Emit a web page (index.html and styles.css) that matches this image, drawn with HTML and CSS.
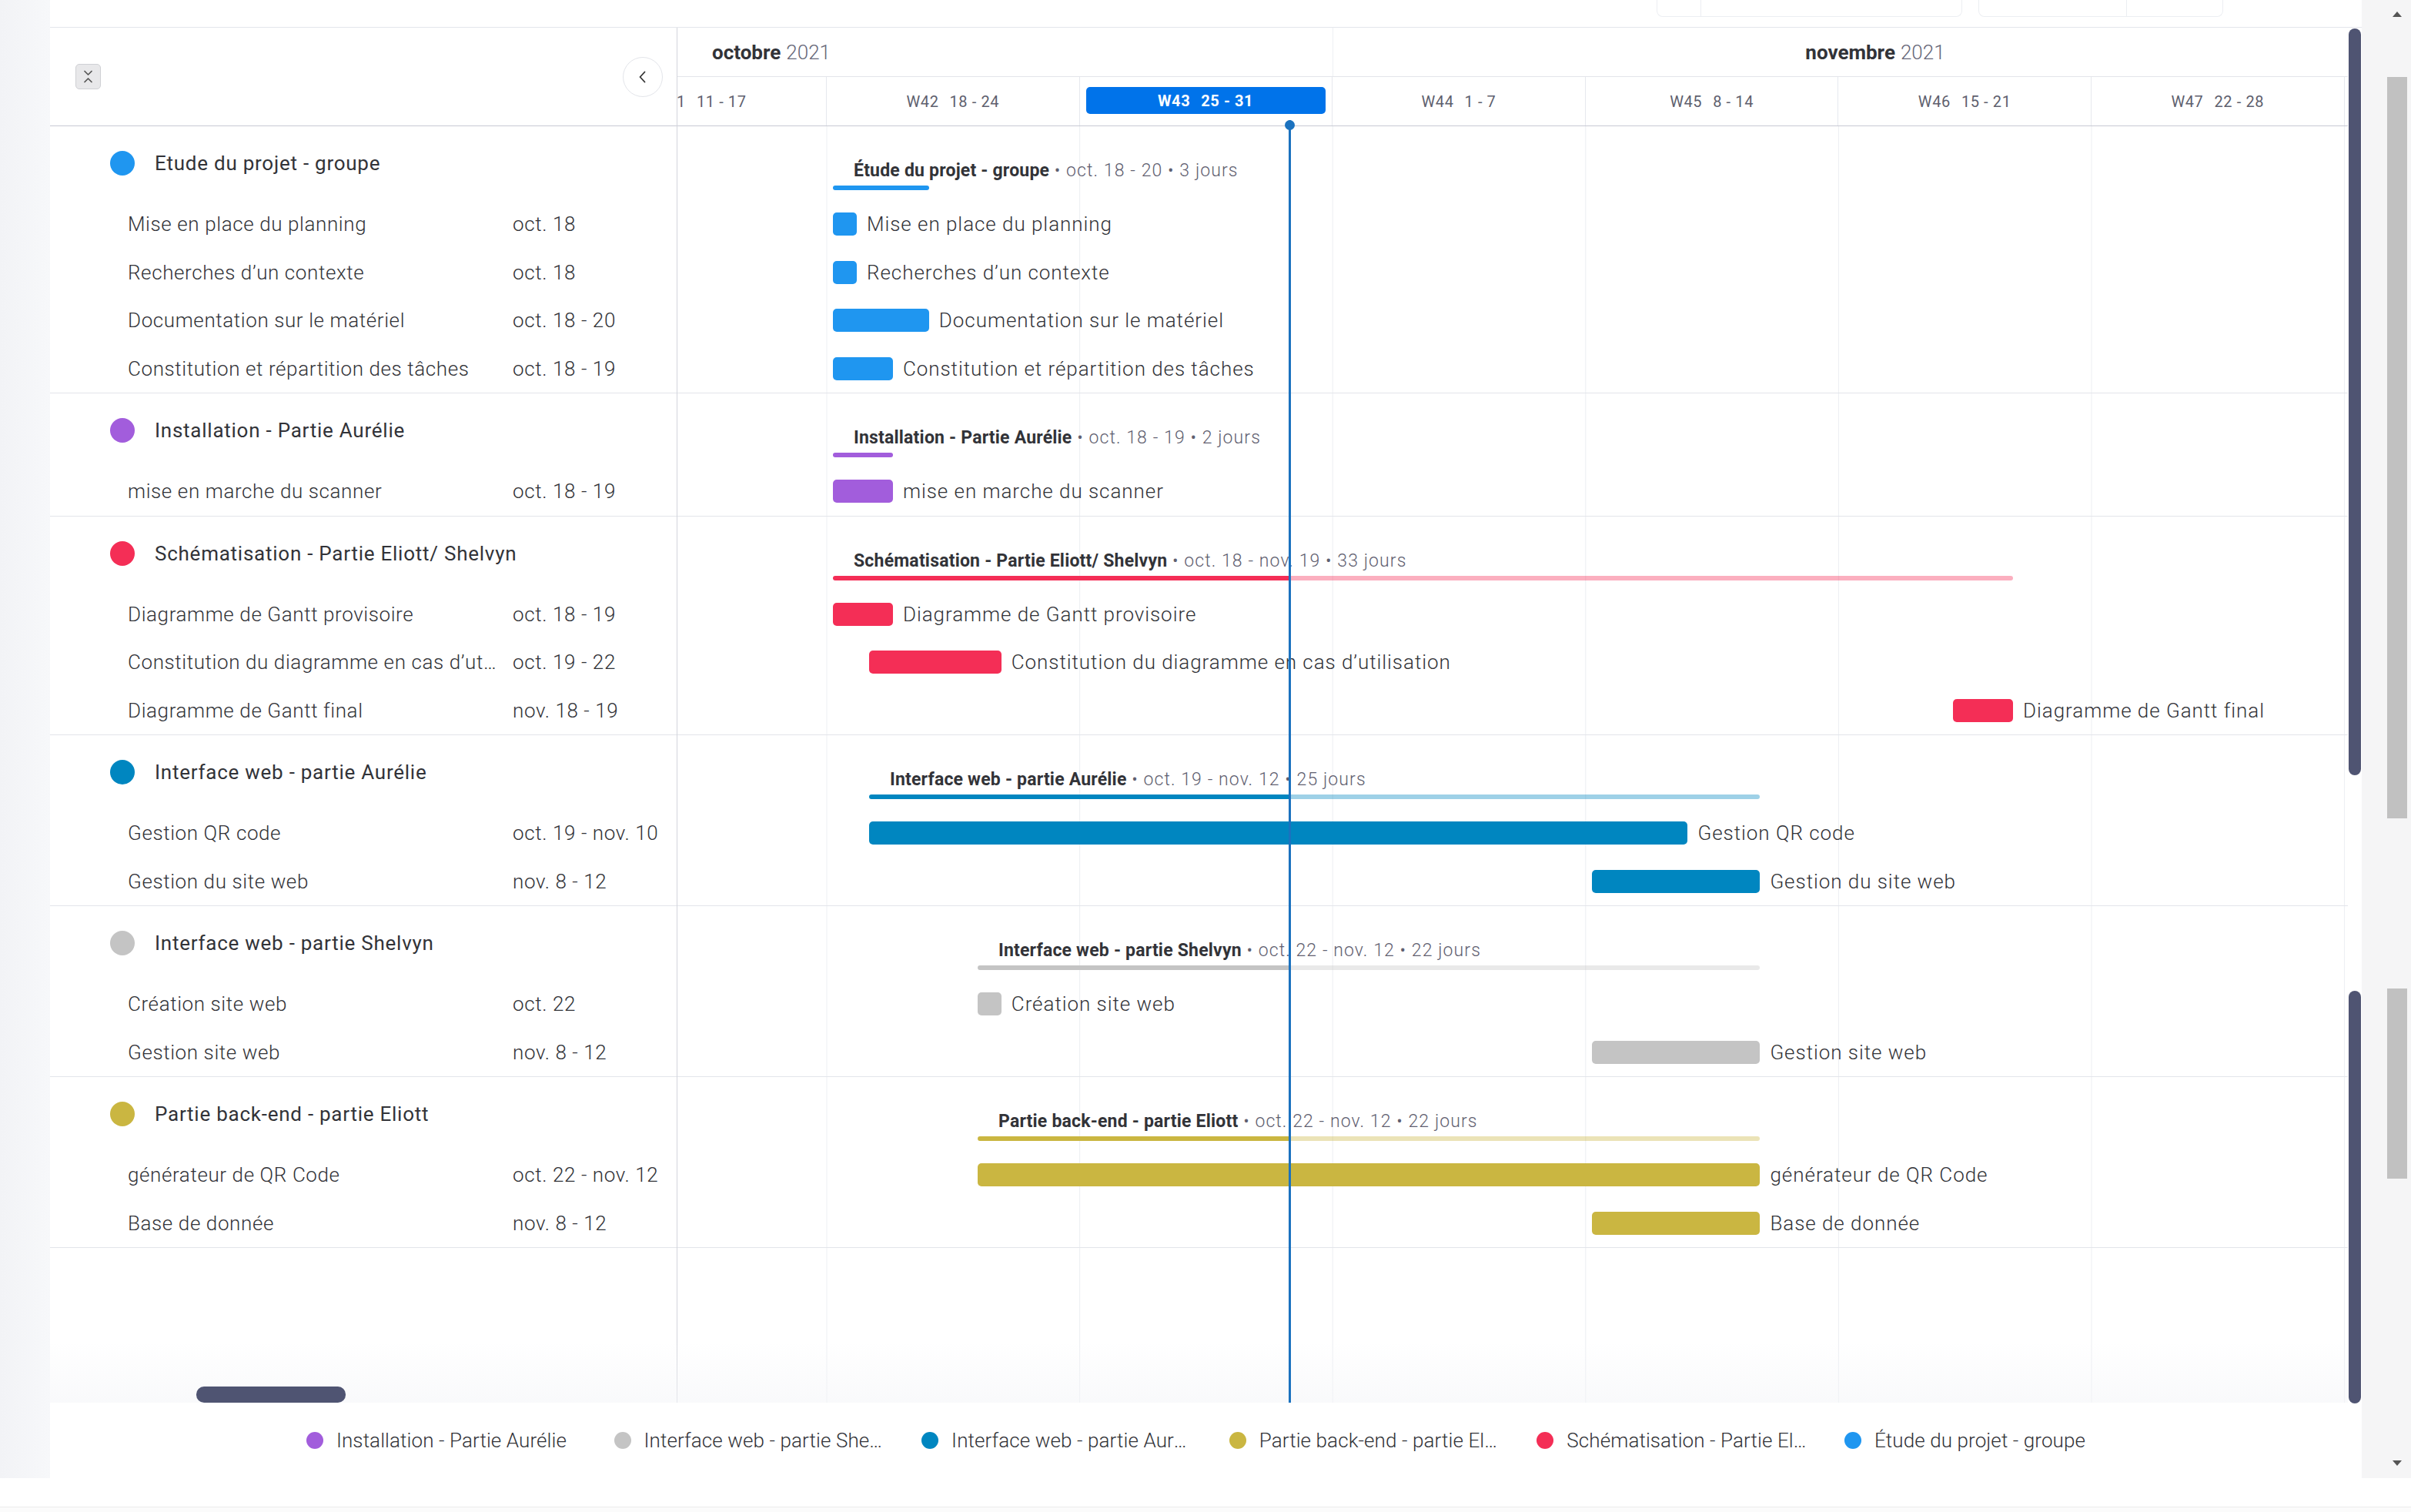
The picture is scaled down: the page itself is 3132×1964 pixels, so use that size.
FILE: index.html
```html
<!DOCTYPE html>
<html lang="fr">
<head>
<meta charset="utf-8">
<title>Gantt</title>
<link rel="stylesheet" href="styles.css">
</head>
<body>
<div class="app">
  <div class="main-row">
    <div class="gutter"></div>
    <div class="board">
      <div class="topbar">
        <div class="ghost ghost-a"><span class="ghost-seg"></span></div>
        <div class="ghost ghost-b"><span class="ghost-seg"></span></div>
      </div>
      <div class="gantt">
        <div class="left">
          <div class="left-head">
            <span class="collapse-ic">
              <svg width="31" height="31" viewBox="0 0 31 31"><path d="M11 8.5l4.5 4.5 4.5-4.5M11 22.5l4.5-4.5 4.5 4.5" fill="none" stroke="#555" stroke-width="1.7" stroke-linecap="round" stroke-linejoin="round"/></svg>
            </span>
            <span class="back-btn">
              <svg width="20" height="20" viewBox="0 0 20 20"><path d="M12.5 3.5L6.5 10l6 6.5" fill="none" stroke="#333" stroke-width="1.8" stroke-linecap="round" stroke-linejoin="round"/></svg>
            </span>
          </div>
          <div class="left-body">
            <div class="grp">
              <div class="grp-title"><span class="dot blue"></span>Etude du projet - groupe</div>
              <div class="task"><span class="tname">Mise en place du planning</span><span class="tdate">oct. 18</span></div>
              <div class="task"><span class="tname">Recherches d’un contexte</span><span class="tdate">oct. 18</span></div>
              <div class="task"><span class="tname">Documentation sur le matériel</span><span class="tdate">oct. 18 - 20</span></div>
              <div class="task"><span class="tname">Constitution et répartition des tâches</span><span class="tdate">oct. 18 - 19</span></div>
            </div>
            <div class="grp">
              <div class="grp-title"><span class="dot purple"></span>Installation - Partie Aurélie</div>
              <div class="task"><span class="tname">mise en marche du scanner</span><span class="tdate">oct. 18 - 19</span></div>
            </div>
            <div class="grp">
              <div class="grp-title"><span class="dot red"></span>Schématisation - Partie Eliott/ Shelvyn</div>
              <div class="task"><span class="tname">Diagramme de Gantt provisoire</span><span class="tdate">oct. 18 - 19</span></div>
              <div class="task"><span class="tname">Constitution du diagramme en cas d’utilisation</span><span class="tdate">oct. 19 - 22</span></div>
              <div class="task"><span class="tname">Diagramme de Gantt final</span><span class="tdate">nov. 18 - 19</span></div>
            </div>
            <div class="grp">
              <div class="grp-title"><span class="dot dblue"></span>Interface web - partie Aurélie</div>
              <div class="task"><span class="tname">Gestion QR code</span><span class="tdate">oct. 19 - nov. 10</span></div>
              <div class="task"><span class="tname">Gestion du site web</span><span class="tdate">nov. 8 - 12</span></div>
            </div>
            <div class="grp">
              <div class="grp-title"><span class="dot grey"></span>Interface web - partie Shelvyn</div>
              <div class="task"><span class="tname">Création site web</span><span class="tdate">oct. 22</span></div>
              <div class="task"><span class="tname">Gestion site web</span><span class="tdate">nov. 8 - 12</span></div>
            </div>
            <div class="grp">
              <div class="grp-title"><span class="dot mustard"></span>Partie back-end - partie Eliott</div>
              <div class="task"><span class="tname">générateur de QR Code</span><span class="tdate">oct. 22 - nov. 12</span></div>
              <div class="task"><span class="tname">Base de donnée</span><span class="tdate">nov. 8 - 12</span></div>
            </div>
          </div>
          <div class="hthumb"></div>
        </div>

        <div class="timeline">
          <div class="tl-head">
            <div class="months">
              <div class="month month-oct"><b>octobre</b><span>2021</span></div>
              <div class="month month-nov"><b>novembre</b><span>2021</span></div>
            </div>
            <div class="weeks">
              <div class="week">W41<span class="rng">11 - 17</span></div>
              <div class="week">W42<span class="rng">18 - 24</span></div>
              <div class="week week-cur"><div class="chip">W43<span class="rng">25 - 31</span></div></div>
              <div class="week">W44<span class="rng">1 - 7</span></div>
              <div class="week">W45<span class="rng">8 - 14</span></div>
              <div class="week">W46<span class="rng">15 - 21</span></div>
              <div class="week">W47<span class="rng">22 - 28</span></div>
            </div>
          </div>
          <div class="tl-body">
            <div class="cgrp">
              <div class="cgrp-title">
                <div class="clabel" style="margin-left:229px"><b>Étude du projet - groupe</b><span> • oct. 18 - 20 • 3 jours</span></div>
                <div class="cline" style="margin-left:202px;width:124.8px"><i class="blue" style="flex:1"></i></div>
              </div>
              <div class="ctask"><span class="bar blue" style="margin-left:202px;width:31px"></span>Mise en place du planning</div>
              <div class="ctask"><span class="bar blue" style="margin-left:202px;width:31px"></span>Recherches d’un contexte</div>
              <div class="ctask"><span class="bar blue" style="margin-left:202px;width:124.8px"></span>Documentation sur le matériel</div>
              <div class="ctask"><span class="bar blue" style="margin-left:202px;width:77.9px"></span>Constitution et répartition des tâches</div>
            </div>
            <div class="cgrp">
              <div class="cgrp-title">
                <div class="clabel" style="margin-left:229px"><b>Installation - Partie Aurélie</b><span> • oct. 18 - 19 • 2 jours</span></div>
                <div class="cline" style="margin-left:202px;width:77.9px"><i class="purple" style="flex:1"></i></div>
              </div>
              <div class="ctask"><span class="bar purple" style="margin-left:202px;width:77.9px"></span>mise en marche du scanner</div>
            </div>
            <div class="cgrp">
              <div class="cgrp-title">
                <div class="clabel" style="margin-left:229px"><b>Schématisation - Partie Eliott/ Shelvyn</b><span> • oct. 18 - nov. 19 • 33 jours</span></div>
                <div class="cline" style="margin-left:202px;width:1533px"><i class="red" style="width:593px"></i><i class="red faded"></i></div>
              </div>
              <div class="ctask"><span class="bar red" style="margin-left:202px;width:77.9px"></span>Diagramme de Gantt provisoire</div>
              <div class="ctask"><span class="bar red" style="margin-left:248.9px;width:171.8px"></span>Constitution du diagramme en cas d’utilisation</div>
              <div class="ctask"><span class="bar red" style="margin-left:1657.1px;width:77.9px"></span>Diagramme de Gantt final</div>
            </div>
            <div class="cgrp">
              <div class="cgrp-title">
                <div class="clabel" style="margin-left:276px"><b>Interface web - partie Aurélie</b><span> • oct. 19 - nov. 12 • 25 jours</span></div>
                <div class="cline" style="margin-left:248.9px;width:1157.5px"><i class="dblue" style="width:546px"></i><i class="dblue faded"></i></div>
              </div>
              <div class="ctask"><span class="bar dblue" style="margin-left:248.9px;width:1063.6px"></span>Gestion QR code</div>
              <div class="ctask"><span class="bar dblue" style="margin-left:1187.7px;width:218.7px"></span>Gestion du site web</div>
            </div>
            <div class="cgrp">
              <div class="cgrp-title">
                <div class="clabel" style="margin-left:417px"><b>Interface web - partie Shelvyn</b><span> • oct. 22 - nov. 12 • 22 jours</span></div>
                <div class="cline" style="margin-left:389.8px;width:1016.7px"><i class="grey" style="width:405px"></i><i class="grey faded"></i></div>
              </div>
              <div class="ctask"><span class="bar grey" style="margin-left:389.8px;width:31px"></span>Création site web</div>
              <div class="ctask"><span class="bar grey" style="margin-left:1187.7px;width:218.7px"></span>Gestion site web</div>
            </div>
            <div class="cgrp">
              <div class="cgrp-title">
                <div class="clabel" style="margin-left:417px"><b>Partie back-end - partie Eliott</b><span> • oct. 22 - nov. 12 • 22 jours</span></div>
                <div class="cline" style="margin-left:389.8px;width:1016.7px"><i class="mustard" style="width:405px"></i><i class="mustard faded"></i></div>
              </div>
              <div class="ctask"><span class="bar mustard" style="margin-left:389.8px;width:1016.7px"></span>générateur de QR Code</div>
              <div class="ctask"><span class="bar mustard" style="margin-left:1187.7px;width:218.7px"></span>Base de donnée</div>
            </div>
          </div>
          <div class="today"></div>
        </div>

        <div class="vscroll">
          <div class="vthumb vthumb-1"></div>
          <div class="vthumb vthumb-2"></div>
        </div>
        <div class="bottom-fade"></div>
      </div>

      <div class="legend">
        <div class="lg-item"><span class="lg-dot purple"></span><span class="lg-text">Installation - Partie Aurélie</span></div>
        <div class="lg-item"><span class="lg-dot grey"></span><span class="lg-text">Interface web - partie Shelvyn</span></div>
        <div class="lg-item"><span class="lg-dot dblue"></span><span class="lg-text">Interface web - partie Aurélie</span></div>
        <div class="lg-item"><span class="lg-dot mustard"></span><span class="lg-text">Partie back-end - partie Eliott</span></div>
        <div class="lg-item"><span class="lg-dot red"></span><span class="lg-text">Schématisation - Partie Eliott/ Shelvyn</span></div>
        <div class="lg-item lg-last"><span class="lg-dot blue"></span><span class="lg-text">Étude du projet - groupe</span></div>
      </div>
    </div>
    <div class="pscroll">
      <span class="arrow-up"></span>
      <span class="pthumb pthumb-1"></span>
      <span class="pthumb pthumb-2"></span>
      <span class="arrow-down"></span>
    </div>
  </div>
  <div class="bottom-strip"></div>
</div>
</body>
</html>
```

FILE: styles.css
```css
* { box-sizing: border-box; }
html, body { margin: 0; padding: 0; }
body {
  width: 3132px;
  height: 1964px;
  overflow: hidden;
  background: #fff;
  color: #323338;
  font-family: Roboto, "Liberation Sans", Arial, sans-serif;
}

.app { display: flex; flex-direction: column; width: 3132px; height: 1964px; }
.main-row { display: flex; height: 1920px; flex: none; }
.gutter { flex: none; width: 65px; background: linear-gradient(to right, #f2f3f6, #f7f8fa); }
.board { flex: none; width: 3003px; display: flex; flex-direction: column; background: #fff; }

/* top bar with the bottoms of two buttons */
.topbar {
  flex: none;
  height: 36px;
  border-bottom: 1px solid #e4e6eb;
  display: flex;
  justify-content: flex-end;
  gap: 21px;
  padding-right: 180px;
}
.ghost { height: 22px; border: 1px solid #eceef2; border-top: none; border-radius: 0 0 8px 8px; display: flex; }
.ghost-a { width: 397px; }
.ghost-b { width: 318px; }
.ghost-seg { border-right: 1px solid #eceef2; height: 100%; }
.ghost-a .ghost-seg { width: 57px; }
.ghost-b .ghost-seg { width: 192px; }

/* gantt */
.gantt { flex: none; height: 1786px; display: flex; position: relative; }
.bottom-fade {
  position: absolute;
  left: 0;
  right: 18px;
  bottom: 0;
  height: 80px;
  background: linear-gradient(to bottom, rgba(244, 245, 248, 0), rgba(244, 245, 248, 0.55));
  pointer-events: none;
}

.left {
  flex: none;
  width: 815px;
  border-right: 1px solid #d3d5dc;
  position: relative;
  display: flex;
  flex-direction: column;
}
.left-head {
  flex: none;
  height: 128px;
  border-bottom: 1px solid #c8cad3;
  display: flex;
  align-items: center;
  justify-content: space-between;
  padding: 0 18px 0 33px;
}
.collapse-ic {
  width: 33px; height: 33px;
  border: 1px solid #cfd0d4;
  border-radius: 5px;
  background: #e8e8ea;
  display: flex; align-items: center; justify-content: center;
}
.back-btn {
  width: 52px; height: 52px;
  border-radius: 50%;
  border: 1px solid #e3e5ea;
  background: #fff;
  display: flex; align-items: center; justify-content: center;
}

.grp { border-bottom: 1px solid #e3e5ea; }
.grp-title {
  height: 96px;
  display: flex;
  align-items: center;
  padding-left: 78px;
  font-size: 26px;
  letter-spacing: 0.75px;
  font-weight: 400;
  color: #323338;
}
.dot { width: 32px; height: 32px; border-radius: 50%; margin-right: 26px; flex: none; }
.task {
  height: 62.5px;
  display: flex;
  align-items: center;
  padding-left: 101px;
  font-size: 26px;
  font-weight: 300;
  letter-spacing: 0.6px;
  color: #323338;
}
.tname { width: 480px; white-space: nowrap; overflow: hidden; text-overflow: ellipsis; }
.tdate { margin-left: 20px; white-space: nowrap; }

.hthumb {
  position: absolute;
  left: 190px;
  bottom: 0;
  width: 194px;
  height: 21px;
  border-radius: 10px;
  background: #4f5472;
  z-index: 2;
}

/* timeline */
.timeline {
  flex: none;
  width: 2170px;
  position: relative;
  overflow: hidden;
  display: flex;
  flex-direction: column;
}
.tl-head { flex: none; height: 128px; border-bottom: 1px solid #c8cad3; }
.months { height: 64px; border-bottom: 1px solid #e3e5ea; display: flex; }
.month { flex: none; height: 100%; display: flex; align-items: center; font-size: 26px; white-space: nowrap; }
.month-oct { width: 852px; padding-left: 45px; border-right: 1px solid #eef0f3; }
.month-nov { width: 1408px; justify-content: center; }
.month b { font-weight: 700; color: #323338; }
.month span { font-weight: 300; color: #676879; margin-left: 7px; }

.weeks { height: 63px; display: flex; }
.week {
  flex: none;
  width: 328.6px;
  height: 100%;
  border-right: 1px solid #e6e8ee;
  display: flex;
  align-items: center;
  justify-content: center;
  font-size: 20px;
  font-weight: 400;
  letter-spacing: 0.6px;
  color: #5e5f6e;
  white-space: nowrap;
}
.week:first-child { margin-left: -134.6px; }
.rng { margin-left: 14px; }
.week-cur { justify-content: flex-start; }
.chip {
  margin-left: 8px;
  width: 311px;
  height: 35px;
  margin-top: -2px;
  border-radius: 5px;
  background: #0073ea;
  color: #fff;
  font-weight: 700;
  display: flex;
  align-items: center;
  justify-content: center;
}

.tl-body {
  flex: 1;
  position: relative;
  background-image: linear-gradient(to right, #eceef2 1px, transparent 1px);
  background-size: 328.6px 100%;
  background-position: 193.5px 0;
}
.cgrp { border-bottom: 1px solid #e3e5ea; }
.cgrp-title {
  height: 96px;
  display: flex;
  flex-direction: column;
  justify-content: flex-end;
  align-items: flex-start;
  padding-bottom: 13px;
}
.clabel { font-size: 23px; line-height: 30px; white-space: nowrap; margin-bottom: 4px; letter-spacing: 0.2px; }
.clabel b { font-weight: 700; color: #323338; }
.clabel span { font-weight: 300; color: #5f6070; letter-spacing: 1.1px; }
.cline { height: 6px; display: flex; border-radius: 3px; overflow: hidden; }
.cline i { display: block; height: 100%; flex: none; }
.cline i.faded { flex: 1; opacity: 0.38; }

.ctask {
  height: 62.5px;
  display: flex;
  align-items: center;
  font-size: 26px;
  font-weight: 300;
  letter-spacing: 0.95px;
  white-space: nowrap;
  color: #323338;
}
.bar { flex: none; height: 30px; border-radius: 5px; margin-right: 13px; }

.today {
  position: absolute;
  left: 794px;
  top: 120px;
  bottom: 0;
  width: 3px;
  background: #1b72bf;
  z-index: 1;
}
.today::before {
  content: "";
  position: absolute;
  top: 0;
  left: -5px;
  width: 13px;
  height: 13px;
  border-radius: 50%;
  background: #1b72bf;
}

/* colours */
.blue { background: #1f96f0; }
.purple { background: #a25ddc; }
.red { background: #f42e56; }
.dblue { background: #0086c0; }
.grey { background: #c4c4c4; }
.mustard { background: #cab641; }

/* inner vertical scrollbar */
.vscroll { flex: none; width: 18px; display: flex; flex-direction: column; align-items: center; padding-top: 1px; }
.vthumb { width: 16px; border-radius: 8px; background: #4f5472; flex: none; }
.vthumb-1 { height: 970px; }
.vthumb-2 { height: 536px; margin-top: 280px; }

/* legend */
.legend {
  flex: none;
  height: 98px;
  display: flex;
  align-items: center;
  justify-content: center;
  gap: 47.6px;
  padding-right: 26px;
}
.lg-item { flex: none; width: 352px; display: flex; align-items: center; font-size: 26px; font-weight: 300; letter-spacing: 0.1px; color: #323338; }
.lg-item.lg-last { width: auto; }
.lg-dot { width: 22px; height: 22px; border-radius: 50%; margin-right: 17px; flex: none; }
.lg-text { max-width: 312px; white-space: nowrap; overflow: hidden; text-overflow: ellipsis; }

/* page scrollbar */
.pscroll {
  flex: none;
  width: 64px;
  background: #f5f5f6;
  display: flex;
  flex-direction: column;
  align-items: flex-end;
  padding-right: 5px;
}
.arrow-up, .arrow-down { width: 0; height: 0; border-left: 6px solid transparent; border-right: 6px solid transparent; margin-right: 7px; }
.arrow-up { border-bottom: 7px solid #555; margin-top: 15px; }
.arrow-down { border-top: 7px solid #555; margin-top: auto; margin-bottom: 16px; }
.pthumb { width: 26px; background: #c1c1c1; flex: none; }
.pthumb-1 { height: 963px; margin-top: 78px; }
.pthumb-2 { height: 247px; margin-top: 221px; }

.bottom-strip {
  flex: none;
  height: 44px;
  background: linear-gradient(to bottom, #fff 37px, #ececec 37px, #ececec 38px, #fbfbfb 38px);
}
```
